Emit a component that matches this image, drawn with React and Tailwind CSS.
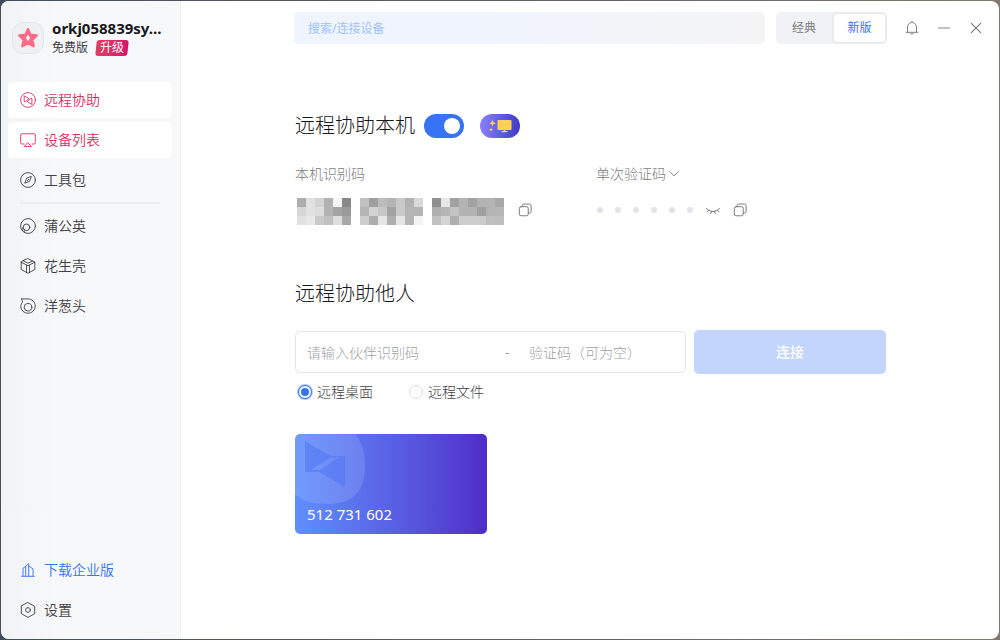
import React, { useState } from "react";

const ID_MOSAIC = [
  ["#adadad #e2e2e2 #d3d3d3 #b2b2b2 #f4f4f4 #898989", "#d6d6d6 #e2e2e2 #dddddd #b3b3b3 #a3a3a3 #9b9b9b", "#e1e1e1 #e9e9e9 #cacaca #c1c1c1 #dedede #a9a9a9"],
  ["#c1c1c1 #a0a0a0 #bcbcbc #b5b5b5 #c9c9c9 #b2b2b2 #d9d9d9", "#b5b5b5 #d3d3d3 #c6c6c6 #a3a3a3 #cacaca #b6b6b6 #b5b5b5", "#cdcdcd #aeaeae #e6e6e6 #afafaf #e6e6e6 #b5b5b5 #f4f4f4"],
  ["#8f8f8f #e7e7e7 #a2a2a2 #b5b5b5 #a2a2a2 #b3b3b3 #b3b3b3 #a8a8a8", "#aeaeae #b5b5b5 #c3c3c3 #b2b2b2 #b2b2b2 #a0a0a0 #b3b3b3 #b6b6b6", "#c0c0c0 #d4d4d4 #afafaf #cdcdcd #cdcdcd #cccccc #bfbfbf #bdbdbd"],
].map((group) => group.map((row) => row.split(" ")));

function Icon({ children, className = "size-4" }) {
  return (
    <svg viewBox="0 0 16 16" className={`shrink-0 ${className}`} fill="none" stroke="currentColor" strokeWidth="0.9" strokeLinecap="round" strokeLinejoin="round" aria-hidden="true">
      {children}
    </svg>
  );
}

const icons = {
  remote: (
    <Icon>
      <circle cx="8" cy="8" r="7.400" />
      <path d="M4.200 4.300v5.300h1.500L8.600 6.900zM11.900 12V6.600h-1.500L7.400 9.300z" />
    </Icon>
  ),
  devices: (
    <Icon>
      <path d="M4 12H1.900A1.200 1.200 0 0 1 .7 10.800V3A1.200 1.200 0 0 1 1.900 1.800h12.200A1.200 1.200 0 0 1 15.300 3v7.800a1.200 1.200 0 0 1-1.200 1.200H12M8 10.800l3.400 3.700H4.600z" />
    </Icon>
  ),
  tools: (
    <Icon>
      <circle cx="8" cy="8" r="7.400" />
      <path d="M11.200 4.800 9.500 9.400 4.800 11.200l1.800-4.700zM7.400 8.600l1.200-1.200" />
    </Icon>
  ),
  dandelion: (
    <Icon>
      <circle cx="8" cy="8" r="7.400" />
      <circle cx="6.500" cy="9.300" r="3.300" />
      <path d="M3.200 9.300c-.9.800-1.300 1.900-1 3M4.300 11.800c-.4.900-.2 1.800.5 2.700" />
    </Icon>
  ),
  cube: (
    <Icon>
      <path d="M8 .7 14.800 4v7.500L8 15.300l-6.800-3.800V4zM1.200 4.200 8 7.700l6.800-3.500M3.600 3.200 8 5.200l4.400-2M6.500 7.300v7M9.500 7.300v7" />
    </Icon>
  ),
  onion: (
    <Icon>
      <path d="M1.600.9h6.200c4.300 0 7.400 3.100 7.400 7.100S12 15.200 8 15.200.8 12 .8 8.400c0-1.700.6-3 1.700-4.200C2.400 3 2.100 2 1.600.9z" />
      <circle cx="8" cy="9.200" r="3.800" />
    </Icon>
  ),
  building: (
    <Icon>
      <path d="M1.700 14.300h12.600M3 14V6.300l2.700-2M5.700 14V4.300l3-2.800V14M8.700 4l4.300 2.900V14" />
    </Icon>
  ),
  settings: (
    <Icon>
      <path d="M8 .6 14.700 4.300v7.400L8 15.400l-6.700-3.700V4.300z" />
      <circle cx="8" cy="8" r="2.400" />
    </Icon>
  ),
};

function NavItem({ icon, label, tone = "default" }) {
  const tones = {
    active: "bg-white text-[#d9305f]",
    link: "text-[#3673f5]",
    default: "text-[#3f4045]",
  };
  return (
    <a href="#" className={`flex h-9 items-center gap-2 rounded-sm pl-3 text-sm font-[350] ${tones[tone]}`}>
      {icons[icon]}
      <span>{label}</span>
    </a>
  );
}

function Sidebar() {
  return (
    <aside className="flex w-[180px] shrink-0 flex-col border-r border-[#eff0f3] bg-linear-to-r from-[#f2f3f5] to-[#f7f8fa] to-30% pr-2 pb-[11px] pl-[7px]">
      <div className="flex items-center gap-2 pt-[17px] pl-1">
        <div className="flex size-8 shrink-0 items-center justify-center rounded-[11px] border border-[#e4e6e9] bg-[#eff0f2]">
          <svg viewBox="0 0 22 22" className="size-[22px]" aria-hidden="true">
            <path d="M11 2.200 13.600 7.700 19.800 8.400 15.300 12.800 16.700 19.200 11 16.200 5.300 19.200 6.700 12.800 2.200 8.400 8.400 7.700z" fill="#ff6a88" stroke="#ff6a88" strokeWidth="2.400" strokeLinejoin="round" />
            <path d="M11 7.700c.9 1.300 1.500 2.200 2 3.300-.5 1.100-1.100 2-2 3.300-.9-1.300-1.500-2.200-2-3.300.5-1.100 1.100-2 2-3.300z" fill="#fff" />
          </svg>
        </div>
        <div className="min-w-0">
          <div className="text-[15px] leading-5 font-bold whitespace-nowrap text-[#17181a]">orkj058839sy...</div>
          <div className="flex items-center gap-2">
            <span className="text-xs leading-5 font-[350] text-[#303136]">免费版</span>
            <button type="button" className="relative isolate h-4 w-8 text-xs leading-4 text-white before:absolute before:inset-0 before:-z-10 before:-skew-x-6 before:rounded-[3px] before:bg-linear-to-r before:from-[#e23f63] before:to-[#d5156a]">升级</button>
          </div>
        </div>
      </div>
      <nav className="mt-6 flex flex-col gap-1">
        <NavItem icon="remote" label="远程协助" tone="active" />
        <NavItem icon="devices" label="设备列表" tone="active" />
        <NavItem icon="tools" label="工具包" />
        <hr className="mx-3 h-0.5 border-0 bg-[#ecedf0]" />
        <NavItem icon="dandelion" label="蒲公英" />
        <NavItem icon="cube" label="花生壳" />
        <NavItem icon="onion" label="洋葱头" />
      </nav>
      <div className="mt-auto flex flex-col gap-1">
        <NavItem icon="building" label="下载企业版" tone="link" />
        <NavItem icon="settings" label="设置" />
      </div>
    </aside>
  );
}

function Header() {
  return (
    <header className="flex items-center pt-[11px] pr-[15px] pl-[113px]">
      <input type="search" aria-label="搜索/连接设备" placeholder="搜索/连接设备" className="h-8 min-w-0 flex-1 rounded-[5px] bg-linear-to-r from-[#eff4ff] from-30% to-[#f4f4f5] px-3.5 text-xs outline-none placeholder:text-[#9cc2ff]" />
      <div className="ml-[11px] flex h-8 w-[111px] rounded-[5px] bg-[#f1f2f5] text-xs">
        <button type="button" className="flex-1 text-[#7b7c80]">经典</button>
        <button type="button" className="h-8 w-[55px] rounded-[5px] border-2 border-[#e9eaf0] bg-white text-[#3673f5]">新版</button>
      </div>
      <div className="ml-[17px] flex gap-4 text-[#77787c]">
        <button type="button" aria-label="通知">
          <Icon>
            <path d="M3.500 12.200V7a4.500 4.500 0 0 1 9 0v5.200M2 12.300h12M6 12.600c.2 2.100 3.800 2.100 4 0M8 1.300v1" />
          </Icon>
        </button>
        <button type="button" aria-label="最小化">
          <Icon><path d="M2.500 8h11" /></Icon>
        </button>
        <button type="button" aria-label="关闭">
          <Icon><path d="m3.300 3.300 9.400 9.400M12.700 3.300l-9.400 9.400" strokeWidth="1.100" /></Icon>
        </button>
      </div>
    </header>
  );
}

function CopyButton() {
  return (
    <button type="button" aria-label="复制" className="text-[#77787c]">
      <Icon className="size-3.5">
        <rect x="1.500" y="4.200" width="10.200" height="10.400" rx="2" strokeWidth="1.100" />
        <path d="M4.800 4V3a1.800 1.800 0 0 1 1.800-1.800h6.600A1.800 1.800 0 0 1 15 3v6.600a1.800 1.800 0 0 1-1.800 1.800H12" strokeWidth="1.100" />
      </Icon>
    </button>
  );
}

function LocalSection() {
  const [enabled, setEnabled] = useState(true);
  return (
    <section>
      <div className="flex h-6 items-center">
        <h2 className="text-xl leading-6 font-light text-[#17181a]">远程协助本机</h2>
        <button type="button" role="switch" aria-checked={enabled} aria-label="允许远程协助本机" onClick={() => setEnabled(!enabled)} className={`ml-[9px] flex h-6 w-10 items-center rounded-full px-1 ${enabled ? "justify-end bg-[#3673f5]" : "bg-gray-300"}`}>
          <span className="size-4 rounded-full bg-white" />
        </button>
        <button type="button" aria-label="屏幕增强" className="ml-4 flex h-6 w-10 items-center justify-center rounded-full bg-linear-to-r from-[#8b80f9] to-[#4038c8]">
          <svg viewBox="0 0 24 14" className="h-3.5 w-6" fill="#ffd058" aria-hidden="true">
            <path d="M4.500.5C4.900 3 5.600 3.700 8 4.200 5.600 4.700 4.900 5.400 4.500 8 4.100 5.400 3.400 4.700 1 4.200 3.400 3.700 4.100 3 4.500.5zM3 8.500c.2 1.500.7 2 2.200 2.200C3.700 11 3.200 11.500 3 13c-.2-1.500-.7-2-2.200-2.300C2.300 10.500 2.800 10 3 8.500z" />
            <rect x="9.500" y="1" width="14" height="10" rx="1" />
            <path d="M15.500 10.500h2V12h2v1.200h-6V12h2z" />
          </svg>
        </button>
      </div>
      <div className="mt-6 grid grid-cols-[301px_1fr]">
        <div>
          <div className="text-sm leading-6 font-light text-[#7b7c80]">本机识别码</div>
          <div className="mt-3 flex">
            <div className="mr-3.5 ml-0.5 flex gap-[9px]" role="img" aria-label="已隐藏的识别码">
              {ID_MOSAIC.map((rows, g) => (
                <div key={g}>
                  {rows.map((cells, r) => (
                    <div key={r} className="flex">
                      {cells.map((color, c) => (
                        <span key={c} className="size-[9px]" style={{ backgroundColor: color }} />
                      ))}
                    </div>
                  ))}
                </div>
              ))}
            </div>
            <span className="flex h-6 items-center"><CopyButton /></span>
          </div>
        </div>
        <div>
          <button type="button" className="flex items-center gap-0.5 text-sm leading-6 font-light text-[#7b7c80]">
            单次验证码
            <Icon className="size-3"><path d="m2.500 5 5.500 5.500L13.500 5" strokeWidth="1.300" /></Icon>
          </button>
          <div className="mt-3 flex h-6 items-center pl-px">
            <div className="flex gap-3">
              {Array.from({ length: 6 }, (_, i) => (
                <span key={i} className="size-1.5 rounded-full bg-[#e1e2ea]" />
              ))}
            </div>
            <button type="button" aria-label="显示验证码" className="ml-3 text-[#66676b]">
              <Icon>
                <path d="M1.500 6.300C4.800 10.600 11.200 10.600 14.500 6.300M3.500 8.300 1.900 9.900M6.300 9.500l-.5 2M9.700 9.500l.5 2M12.500 8.300l1.600 1.600" />
              </Icon>
            </button>
            <span className="ml-3 flex"><CopyButton /></span>
          </div>
        </div>
      </div>
    </section>
  );
}

function PartnerSection() {
  const [mode, setMode] = useState("desktop");
  const field = "h-full min-w-0 text-sm font-light outline-none placeholder:text-[#a0a1a6]";
  const modes = [["desktop", "远程桌面"], ["file", "远程文件"]];
  return (
    <section className="mt-[57px]">
      <h2 className="text-xl leading-6 font-light text-[#17181a]">远程协助他人</h2>
      <form className="mt-6 flex items-center gap-2" onSubmit={(e) => e.preventDefault()}>
        <div className="flex h-[42px] min-w-0 flex-1 items-center rounded-[5px] border border-[#e3e4ea] px-[11px]">
          <input aria-label="伙伴识别码" placeholder="请输入伙伴识别码" className={`${field} flex-1`} />
          <span className="w-6 text-sm font-light text-[#85868a]">-</span>
          <input aria-label="验证码" placeholder="验证码（可为空）" className={`${field} w-[145px]`} />
        </div>
        <button type="submit" className="h-11 w-48 rounded-[5px] bg-[#c3d4fd] text-sm font-medium text-white">连接</button>
      </form>
      <div className="mt-2 flex gap-9 pl-[3px]">
        {modes.map(([value, label]) => (
          <label key={value} className="flex items-center gap-[5px] text-sm leading-5 font-light text-[#3f4045]">
            <input type="radio" name="mode" checked={mode === value} onChange={() => setMode(value)} className="size-3.5 appearance-none rounded-full border border-[#dcdde5] bg-white bg-clip-content p-0.5 checked:border-[#3673f5] checked:bg-[#3673f5] checked:ring-1 checked:ring-[#3673f5]/40" />
            {label}
          </label>
        ))}
      </div>
      <button type="button" className="relative mt-8 flex h-[100px] w-48 items-end overflow-hidden rounded-[5px] bg-linear-to-r from-[#5f8fff] to-[#502bc8] px-3 pb-2 text-[15px] leading-6 text-white">
        <svg viewBox="0 0 70 70" className="absolute top-0 left-0 size-[70px]" aria-hidden="true">
          <path d="M0 0h60C67 8 70 18 70 32c0 24-10 38-38 38C18 70 7 67 0 60z" fill="#fff" fillOpacity=".12" />
          <path d="M10 7 36 22H50V53L24 38H10zM44 23.500H35L16 36h9z" fill="#5278f4" fillOpacity=".6" fillRule="evenodd" />
        </svg>
        <span className="relative">512 731 602</span>
      </button>
    </section>
  );
}

export default function App() {
  return (
    <div className="flex min-h-screen bg-linear-to-r from-[#444c5f] via-[#625d65] to-[#82786f] p-px font-['Noto_Sans','Noto_Sans_CJK_SC',sans-serif]">
      <div className="flex flex-1 overflow-hidden rounded-lg bg-white">
        <Sidebar />
        <main className="min-w-0 flex-1">
          <Header />
          <div className="pt-[70px] pr-[113px] pb-8 pl-[114px]">
            <LocalSection />
            <PartnerSection />
          </div>
        </main>
      </div>
    </div>
  );
}
